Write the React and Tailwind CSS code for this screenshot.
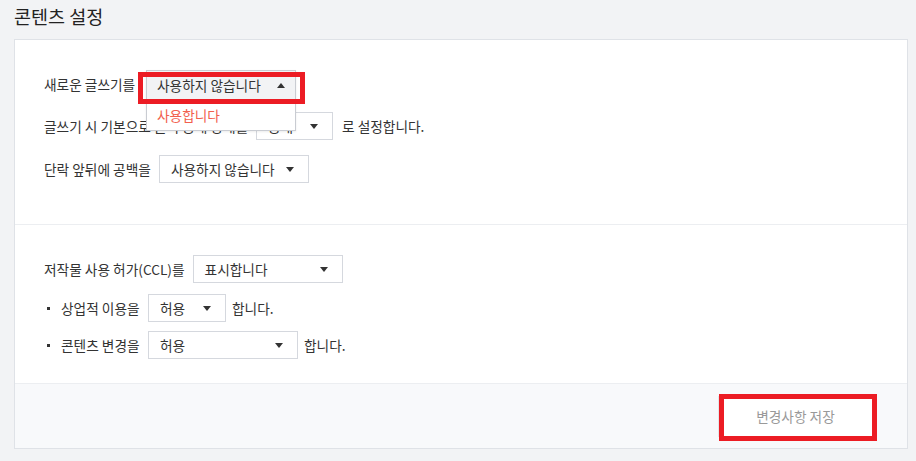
import React from 'react';

const Caret = ({ up }) => (
    <svg width="8" height="5" viewBox="0 0 8 5" className="shrink-0">
        {up ? <path d="M0 5 L4 0 L8 5 Z" fill="#333" /> : <path d="M0 0 L8 0 L4 5 Z" fill="#333" />}
    </svg>
);

const Select = ({ value, width }) => (
    <div
        className={`h-[28px] ${width} shrink-0 border border-[#d5d8de] bg-white flex items-center justify-between pl-[11px] pr-[14px] text-[#333]`}
    >
        <span>{value}</span>
        <Caret />
    </div>
);

const Row = ({ children, className = '' }) => (
    <div className={`flex items-center whitespace-nowrap ${className}`}>{children}</div>
);

export default function App() {
    return (
        <div
            className="w-[916px] h-[461px] bg-[#f2f3f5] px-[14px] text-[13.7px] text-[#333] overflow-hidden"
            style={{ fontFamily: '"Noto Sans CJK KR", "Noto Sans", sans-serif' }}
        >
            <h1 className="h-[39px] flex items-center pb-[6px] text-[18.5px] text-[#222] font-normal">콘텐츠 설정</h1>

            <div className="relative w-[894px] border border-[#dfe2e7] bg-white">
                {/* section 1 */}
                <div className="pt-[30px] pb-[41px] pl-[29px] border-b border-[#eceef1]">
                    <Row>
                        <span className="mr-[10px] w-[92px] overflow-hidden">새로운 글쓰기를</span>
                        <div className="relative w-[150px] h-[28px]">
                            <div className="absolute left-0 top-0 w-[150px] border border-[#c9ccd2] bg-white shadow-[0_1px_2px_rgba(0,0,0,0.08)] z-10">
                                <div className="h-[29px] bg-[#f2f3f5] flex items-center justify-between pl-[10px] pr-[10px]">
                                    <span>사용하지 않습니다</span>
                                    <Caret up />
                                </div>
                                <div className="h-[30px] flex items-center pl-[10px] text-[#f2604e]">사용합니다</div>
                            </div>
                        </div>
                    </Row>
                    <Row className="mt-[14px]">
                        <span className="mr-[8px] w-[204px] overflow-hidden">글쓰기 시 기본으로 글의 공개 상태를</span>
                        <Select value="공개" width="w-[77px]" />
                        <span className="ml-[9px]">로 설정합니다.</span>
                    </Row>
                    <Row className="mt-[15px]">
                        <span className="mr-[8px]">단락 앞뒤에 공백을</span>
                        <Select value="사용하지 않습니다" width="w-[150px]" />
                    </Row>
                </div>

                {/* section 2 */}
                <div className="pt-[30px] pb-[24px] pl-[29px] border-b border-[#eceef1]">
                    <Row>
                        <span className="mr-[8px]">저작물 사용 허가(CCL)를</span>
                        <Select value="표시합니다" width="w-[150px]" />
                    </Row>
                    <Row className="mt-[11px]">
                        <span className="w-[3px] h-[3px] bg-[#333] ml-[3px] mr-[11px]" />
                        <span className="w-[87px]">상업적 이용을</span>
                        <Select value="허용" width="w-[78px]" />
                        <span className="ml-[6px]">합니다.</span>
                    </Row>
                    <Row className="mt-[9px]">
                        <span className="w-[3px] h-[3px] bg-[#333] ml-[3px] mr-[11px]" />
                        <span className="w-[87px]">콘텐츠 변경을</span>
                        <Select value="허용" width="w-[150px]" />
                        <span className="ml-[6px]">합니다.</span>
                    </Row>
                </div>

                {/* footer */}
                <div className="h-[64px] bg-[#f8f9fb] flex items-center justify-end pr-[34px]">
                    <div className="relative">
                        <button className="w-[155px] h-[41px] border border-[#e3e5e9] bg-white text-[#999] text-[13.7px]">
                            변경사항 저장
                        </button>
                        <div className="absolute left-[1px] top-[-2px] w-[158px] h-[47px] border-[5px] border-[#ec1c24] pointer-events-none" />
                    </div>
                </div>

                {/* annotation box on dropdown */}
                <div className="absolute left-[123px] top-[32px] w-[167px] h-[32px] border-[5px] border-[#ec1c24] pointer-events-none z-20" />
            </div>
        </div>
    );
}
